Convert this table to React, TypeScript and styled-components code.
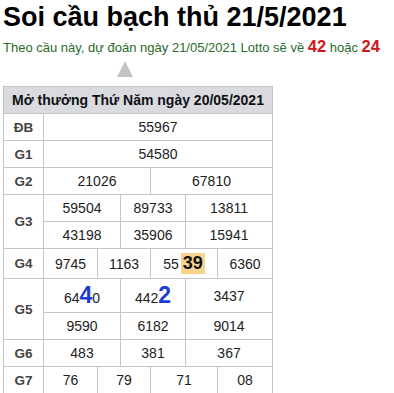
import React from 'react';
import styled, { createGlobalStyle } from 'styled-components';

const GlobalStyle = createGlobalStyle`
  body {
    margin: 0;
    background: #fff;
    font-family: Arial, "Liberation Sans", sans-serif;
    color: #222;
  }
`;

const Page = styled.div`
  padding: 0 3px;
`;

const Title = styled.h1`
  margin: 0;
  padding-top: 1px;
  font-size: 27px;
  line-height: 32px;
  font-weight: 700;
  color: #000;
`;

const Lead = styled.p`
  margin: 6px 0 0;
  font-size: 13px;
  line-height: 18px;
  color: #2b6a2b;
  white-space: nowrap;
`;

const Hit = styled.b`
  color: #d01616;
  font-size: 16.5px;
  line-height: 14px;
`;

const Arrow = styled.div`
  width: 0;
  height: 0;
  margin: 4px 0 0 114px;
  border-left: 8px solid transparent;
  border-right: 8px solid transparent;
  border-bottom: 16px solid #c4c4c4;
`;

const Board = styled.table`
  margin-top: 9px;
  width: 270px;
  table-layout: fixed;
  border-collapse: collapse;
  font-size: 14px;
`;

const HeadCell = styled.th`
  background: #d9dbe1;
  border: 1px solid #c3c5cc;
  height: 26px;
  padding: 0;
  font-size: 14px;
  font-weight: 700;
  color: #111;
  text-align: center;
  white-space: nowrap;
`;

const Label = styled.td`
  border: 1px solid #c3c5cc;
  padding: 0;
  text-align: center;
  font-size: 13.5px;
  font-weight: 700;
  color: #444;
`;

const Num = styled.td<{ $h?: number }>`
  border: 1px solid #c3c5cc;
  padding: 0;
  height: ${(p) => p.$h ?? 26}px;
  text-align: center;
  color: #222;
  white-space: nowrap;
`;

const Big = styled.b`
  color: #1c3cd6;
  font-size: 23px;
`;

const Mark = styled.b`
  display: inline-block;
  background: #f7d38e;
  color: #111;
  font-size: 18px;
  line-height: 21px;
  padding: 0 2px;
  margin-left: 2px;
`;

const widths = [40, 54, 23, 30, 35, 32, 55];

export default function App() {
  return (
    <Page>
      <GlobalStyle />
      <Title>Soi cầu bạch thủ 21/5/2021</Title>
      <Lead>
        Theo cầu này, dự đoán ngày 21/05/2021 Lotto sẽ về <Hit>42</Hit> hoặc <Hit>24</Hit>
      </Lead>
      <Arrow />
      <Board>
        <colgroup>
          {widths.map((w, i) => (
            <col key={i} style={{ width: w }} />
          ))}
        </colgroup>
        <thead>
          <tr>
            <HeadCell colSpan={7}>Mở thưởng Thứ Năm ngày 20/05/2021</HeadCell>
          </tr>
        </thead>
        <tbody>
          <tr>
            <Label>ĐB</Label>
            <Num colSpan={6}>55967</Num>
          </tr>
          <tr>
            <Label>G1</Label>
            <Num colSpan={6}>54580</Num>
          </tr>
          <tr>
            <Label>G2</Label>
            <Num colSpan={3}>21026</Num>
            <Num colSpan={3}>67810</Num>
          </tr>
          <tr>
            <Label rowSpan={2}>G3</Label>
            <Num colSpan={2}>59504</Num>
            <Num colSpan={2}>89733</Num>
            <Num colSpan={2}>13811</Num>
          </tr>
          <tr>
            <Num colSpan={2}>43198</Num>
            <Num colSpan={2}>35906</Num>
            <Num colSpan={2}>15941</Num>
          </tr>
          <tr>
            <Label>G4</Label>
            <Num $h={29}>9745</Num>
            <Num colSpan={2}>1163</Num>
            <Num colSpan={2}>
              55<Mark>39</Mark>
            </Num>
            <Num>6360</Num>
          </tr>
          <tr>
            <Label rowSpan={2}>G5</Label>
            <Num colSpan={2} $h={33}>
              64<Big>4</Big>0
            </Num>
            <Num colSpan={2}>
              442<Big>2</Big>
            </Num>
            <Num colSpan={2}>3437</Num>
          </tr>
          <tr>
            <Num colSpan={2}>9590</Num>
            <Num colSpan={2}>6182</Num>
            <Num colSpan={2}>9014</Num>
          </tr>
          <tr>
            <Label>G6</Label>
            <Num colSpan={2}>483</Num>
            <Num colSpan={2}>381</Num>
            <Num colSpan={2}>367</Num>
          </tr>
          <tr>
            <Label>G7</Label>
            <Num>76</Num>
            <Num colSpan={2}>79</Num>
            <Num colSpan={2}>71</Num>
            <Num>08</Num>
          </tr>
        </tbody>
      </Board>
    </Page>
  );
}
